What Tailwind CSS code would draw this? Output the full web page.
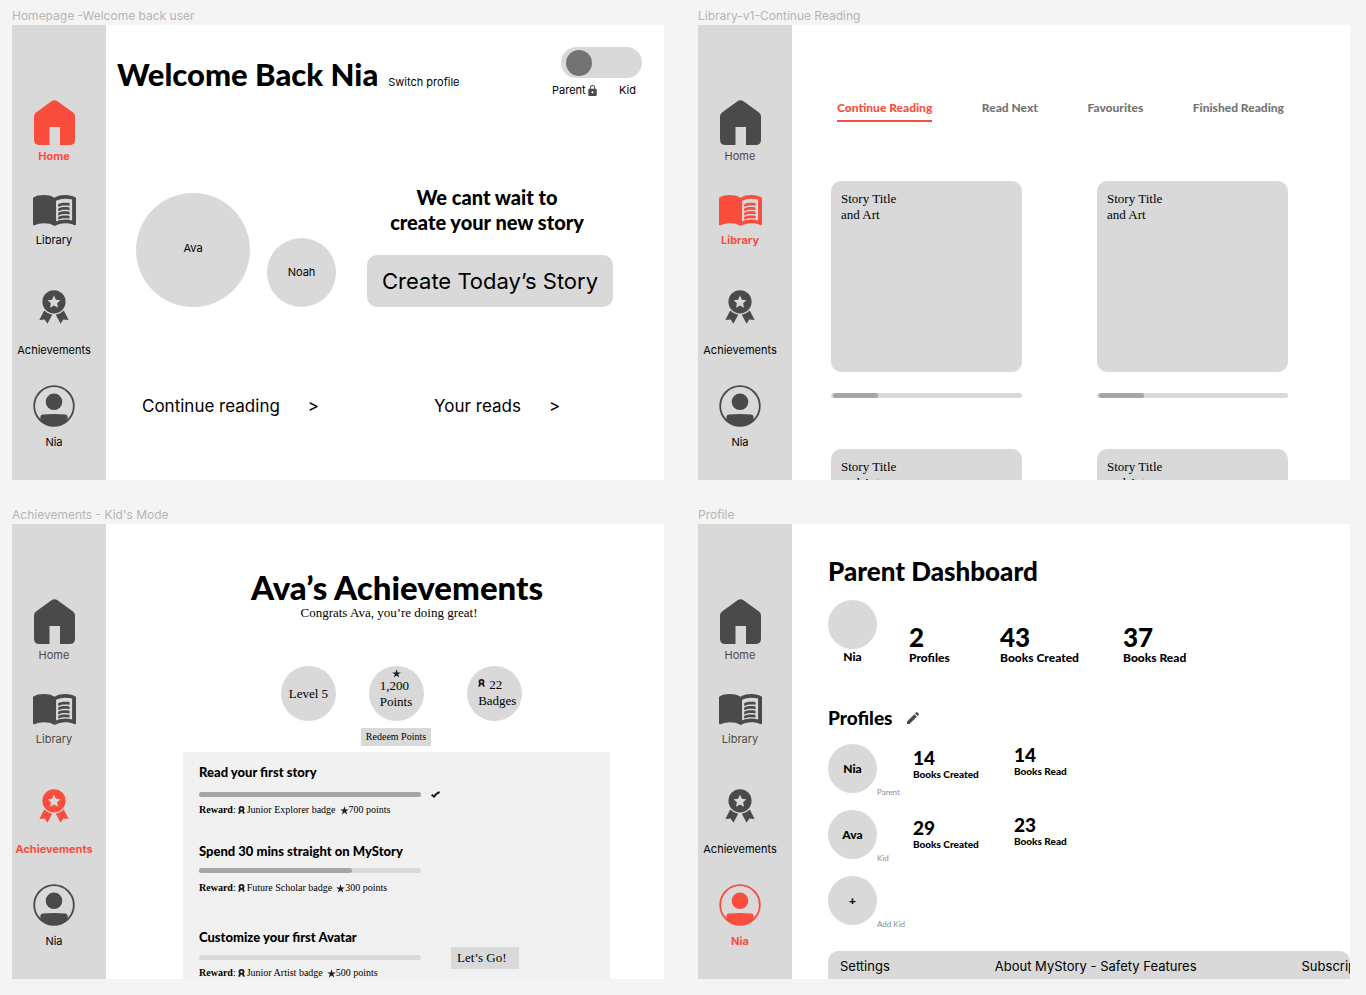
<!DOCTYPE html>
<html lang="en">
<head>
  <meta charset="UTF-8" />
  <meta name="viewport" content="width=device-width, initial-scale=1.0" />
  <title>MyStory Wireframes</title>
  <script src="https://cdn.jsdelivr.net/npm/@tailwindcss/browser@4"></script>
</head>
<body class="bg-[#f4f4f4] font-[Inter,sans-serif] text-black">
  <!-- Shared icons -->
  <svg class="hidden" xmlns="http://www.w3.org/2000/svg">
    <symbol id="icon-home" viewBox="0 0 41 45">
      <path d="M17.5 1.2Q20.5-.9 23.5 1.2L39 12.6Q41 14 41 16.5V39.5Q41 45 35.5 45H26V27H15.5V45H5.5Q0 45 0 39.5V16.5Q0 14 2 12.6Z" />
    </symbol>
    <symbol id="icon-book" viewBox="1 4.5 22 17" preserveAspectRatio="none">
      <path d="M21 5c-1.11-.35-2.33-.5-3.5-.5-1.95 0-4.05.4-5.5 1.5-1.45-1.1-3.55-1.5-5.5-1.5S2.45 4.9 1 6v14.65c0 .25.25.5.5.5.1 0 .15-.05.25-.05C3.1 20.45 5.05 20 6.5 20c1.95 0 4.05.4 5.5 1.5 1.35-.85 3.8-1.5 5.5-1.5 1.65 0 3.35.3 4.75 1.05.1.05.15.05.25.05.25 0 .5-.25.5-.5V6c-.6-.45-1.25-.75-2-1zm0 13.5c-1.1-.35-2.3-.5-3.5-.5-1.34 0-3.3.4-4.7 1V7.6c1.4-.7 3.3-1.1 4.7-1.1 1.2 0 2.4.15 3.5.5v11.5z" />
      <path d="M17.2 10.2c.88 0 1.73.09 2.5.26V8.94c-.79-.15-1.64-.24-2.5-.24-1.5 0-2.4.29-3.3.83v1.56c.9-.54 1.8-.89 3.3-.89zM13.900 11.900v1.560c.9-.54 1.8-.89 3.3-.89.88 0 1.73.09 2.5.26V11.310c-.79-.15-1.64-.24-2.5-.24-1.5 0-2.400.300-3.300.830zM17.200 13.430c-1.500 0-2.400.290-3.300.830v1.560c.9-.54 1.8-.89 3.3-.89.88 0 1.73.09 2.5.26v-1.520c-.79-.16-1.64-.24-2.5-.24zM17.200 15.790c-1.500 0-2.400.290-3.300.830v1.360c.9-.44 1.8-.79 3.3-.79.88 0 1.73.09 2.5.26v-1.420c-.79-.16-1.64-.24-2.5-.24z" />
    </symbol>
    <symbol id="icon-award" viewBox="0 0 30 34">
      <path fill-rule="evenodd" d="M15 .2a11.6 11.6 0 1 1 0 23.2a11.6 11.6 0 1 1 0-23.2zM15 5.6l1.9 4.1 4.5.5-3.3 3.1.9 4.4-4-2.2-4 2.2.9-4.4-3.3-3.1 4.5-.5z" />
      <path d="M5.2 20.6Q8.400 24 13.200 24.800L8.400 33.800 5.700 29.600.4 30.100zM24.800 20.600Q21.600 24 16.800 24.800L21.600 33.800 24.300 29.600 29.600 30.100z" />
    </symbol>
    <symbol id="icon-user" viewBox="0 0 42 42">
      <circle cx="21" cy="21" r="19.8" fill="none" stroke="currentColor" stroke-width="1.8" />
      <circle cx="21" cy="16.8" r="8.3" />
      <path d="M7.4 35.6V32Q7.4 29.9 9.6 29.6Q21 28.4 32.4 29.6Q34.6 29.9 34.6 32V35.6A20 20 0 0 1 7.4 35.6z" />
    </symbol>
    <symbol id="icon-ribbon" viewBox="0 0 8 9">
      <path fill-rule="evenodd" d="M4 0C6.500 0 7.400 1.500 7.400 3.200C7.400 4.200 7 4.900 6.700 5.300L7.900 8.600L5.600 8.800L5 6.600H3L2.400 8.800L.1 8.600L1.300 5.300C1 4.900.6 4.200.6 3.200C.6 1.500 1.500 0 4 0zM4 1.900A1.300 1.300 0 1 0 4 4.500A1.300 1.300 0 1 0 4 1.900z" />
    </symbol>
    <symbol id="icon-star" viewBox="0 0 20 20">
      <path d="M10 .5l2.3 7h7.4l-6 4.3 2.3 7.2-6-4.4L4 19l2.3-7.2-6-4.3h7.4z" />
    </symbol>
  </svg>

  <div class="grid grid-cols-2 gap-x-[34px] gap-y-[26px] pt-[7px] pr-4 pl-3">

    <!-- Homepage -->
    <section>
      <h2 class="text-[12px] leading-[18px] text-[#b5b5b5]">Homepage -Welcome back user</h2>
      <div class="flex aspect-[652/455] overflow-hidden bg-white">
        <nav class="flex w-[94px] shrink-0 flex-col items-center bg-[#d9d9d9] pt-[75px] pr-2.5 text-[11px] leading-4">
          <a href="#" class="flex flex-col items-center gap-[3px] font-bold text-[#f94e3d]">
            <svg class="h-[45px] w-[41px] fill-current"><use href="#icon-home" /></svg>Home
          </a>
          <a href="#" class="mt-[31px] flex flex-col items-center gap-1.5">
            <svg class="h-[31px] w-[43px] fill-current text-[#4a4a4a]"><use href="#icon-book" /></svg>Library
          </a>
          <a href="#" class="mt-[42px] flex flex-col items-center gap-[18px]">
            <svg class="h-[34px] w-[30px] fill-current text-[#4a4a4a]"><use href="#icon-award" /></svg>Achievements
          </a>
          <a href="#" class="mt-[27px] flex flex-col items-center gap-[7px]">
            <svg class="h-[42px] w-[42px] fill-current text-[#4a4a4a]"><use href="#icon-user" /></svg>Nia
          </a>
        </nav>
        <main class="min-w-0 flex-1">
          <header class="flex justify-between pt-[22px] pr-[22px] pl-[11px]">
            <div class="flex items-baseline gap-2.5 pt-[7px]">
              <h1 class="font-[Lato,sans-serif] text-[31px] leading-10 font-black">Welcome Back Nia</h1>
              <a href="#" class="text-[11px]">Switch profile</a>
            </div>
            <div class="flex w-[90px] flex-col items-end">
              <input id="mode" type="checkbox" role="switch" aria-label="Kid mode" class="h-[31px] w-[81px] appearance-none rounded-full bg-[#d9d9d9] px-[5px] py-[3px] before:block before:size-[26px] before:rounded-full before:bg-[#737373] before:content-['']" />
              <label for="mode" class="mt-1 flex w-full items-center pr-1.5 text-[11px] leading-4">
                <span>Parent</span>
                <svg class="ml-0.5 h-[11px] w-[9px] fill-[#4a4a4a]" viewBox="4 1 16 21"><path d="M18 8h-1V6c0-2.76-2.24-5-5-5S7 3.24 7 6v2H6c-1.1 0-2 .9-2 2v10c0 1.1.9 2 2 2h12c1.1 0 2-.9 2-2V10c0-1.1-.9-2-2-2zm-6 9c-1.1 0-2-.9-2-2s.9-2 2-2 2 .9 2 2-.9 2-2 2zm3.1-9H8.900V6c0-1.710 1.390-3.100 3.100-3.100s3.100 1.390 3.100 3.100v2z" /></svg>
                <span class="ml-auto">Kid</span>
              </label>
            </div>
          </header>
          <div class="mt-[87px] flex items-end pl-[30px] text-[11px]">
            <button class="size-[114px] rounded-full bg-[#d9d9d9] pb-1">Ava</button>
            <button class="ml-[17px] size-[69px] rounded-full bg-[#d9d9d9]">Noah</button>
            <div class="ml-[31px] flex flex-col items-center">
              <p class="pr-1.5 text-center font-[Lato,sans-serif] text-[20px] leading-[25px] font-black">We cant wait to<br />create your new story</p>
              <button class="mt-5 h-[52px] rounded-[10px] bg-[#d9d9d9] px-[15px] text-[22px] whitespace-nowrap">Create Today’s Story</button>
            </div>
          </div>
          <div class="mt-[87px] flex gap-[115px] pl-9 text-[17px] leading-6">
            <a href="#" class="flex gap-7"><span>Continue reading</span><span>&gt;</span></a>
            <a href="#" class="flex gap-7"><span>Your reads</span><span>&gt;</span></a>
          </div>
        </main>
      </div>
    </section>

    <!-- Library -->
    <section>
      <h2 class="text-[12px] leading-[18px] text-[#b5b5b5]">Library-v1-Continue Reading</h2>
      <div class="flex aspect-[652/455] overflow-hidden bg-white">
        <nav class="flex w-[94px] shrink-0 flex-col items-center bg-[#d9d9d9] pt-[75px] pr-2.5 text-[11px] leading-4">
          <a href="#" class="flex flex-col items-center gap-[3px] text-[#4a4a4a]">
            <svg class="h-[45px] w-[41px] fill-current"><use href="#icon-home" /></svg>Home
          </a>
          <a href="#" class="mt-[31px] flex flex-col items-center gap-1.5 font-bold text-[#f94e3d]">
            <svg class="h-[31px] w-[43px] fill-current"><use href="#icon-book" /></svg>Library
          </a>
          <a href="#" class="mt-[42px] flex flex-col items-center gap-[18px]">
            <svg class="h-[34px] w-[30px] fill-current text-[#4a4a4a]"><use href="#icon-award" /></svg>Achievements
          </a>
          <a href="#" class="mt-[27px] flex flex-col items-center gap-[7px]">
            <svg class="h-[42px] w-[42px] fill-current text-[#4a4a4a]"><use href="#icon-user" /></svg>Nia
          </a>
        </nav>
        <main class="min-w-0 flex-1">
          <div class="flex justify-between pt-[73px] pr-[66px] pl-[45px] font-[Lato,sans-serif] text-[12px] leading-5 font-black whitespace-nowrap text-[#757575]">
            <a href="#" class="border-b-2 border-[#f94e3d] pb-0.5 text-[#f94e3d]">Continue Reading</a>
            <a href="#">Read Next</a>
            <a href="#">Favourites</a>
            <a href="#">Finished Reading</a>
          </div>
          <div class="mt-[59px] grid grid-cols-2 gap-x-[75px] gap-y-[51px] pr-[62px] pl-[39px] font-['Liberation_Serif',serif] text-[13px] leading-4">
            <article>
              <div class="aspect-square rounded-[10px] bg-[#d9d9d9] p-2.5">Story Title<br />and Art</div>
              <div class="mt-[21px] h-[5px] rounded-full bg-[#d9d9d9] px-0.5"><div class="h-full rounded-full bg-[#a6a6a6]" style="width: 24%"></div></div>
            </article>
            <article>
              <div class="aspect-square rounded-[10px] bg-[#d9d9d9] p-2.5">Story Title<br />and Art</div>
              <div class="mt-[21px] h-[5px] rounded-full bg-[#d9d9d9] px-0.5"><div class="h-full rounded-full bg-[#a6a6a6]" style="width: 24%"></div></div>
            </article>
            <article>
              <div class="aspect-square rounded-[10px] bg-[#d9d9d9] p-2.5">Story Title<br />and Art</div>
            </article>
            <article>
              <div class="aspect-square rounded-[10px] bg-[#d9d9d9] p-2.5">Story Title<br />and Art</div>
            </article>
          </div>
        </main>
      </div>
    </section>

    <!-- Achievements -->
    <section>
      <h2 class="text-[12px] leading-[18px] text-[#b5b5b5]">Achievements - Kid's Mode</h2>
      <div class="flex aspect-[652/455] overflow-hidden bg-white">
        <nav class="flex w-[94px] shrink-0 flex-col items-center bg-[#d9d9d9] pt-[75px] pr-2.5 text-[11px] leading-4">
          <a href="#" class="flex flex-col items-center gap-[3px] text-[#4a4a4a]">
            <svg class="h-[45px] w-[41px] fill-current"><use href="#icon-home" /></svg>Home
          </a>
          <a href="#" class="mt-[31px] flex flex-col items-center gap-1.5 text-[#4a4a4a]">
            <svg class="h-[31px] w-[43px] fill-current"><use href="#icon-book" /></svg>Library
          </a>
          <a href="#" class="mt-[42px] flex flex-col items-center gap-[18px] font-bold text-[#f94e3d]">
            <svg class="h-[34px] w-[30px] fill-current"><use href="#icon-award" /></svg>Achievements
          </a>
          <a href="#" class="mt-[27px] flex flex-col items-center gap-[7px]">
            <svg class="h-[42px] w-[42px] fill-current text-[#4a4a4a]"><use href="#icon-user" /></svg>Nia
          </a>
        </nav>
        <main class="min-w-0 flex-1 pt-[45px] font-['Liberation_Serif',serif] text-[13px] leading-4">
          <h1 class="pl-6 text-center font-[Lato,sans-serif] text-[33px] leading-9 font-black">Ava’s Achievements</h1>
          <p class="pl-2 text-center">Congrats Ava, you’re doing great!</p>
          <div class="mt-[45px] flex items-start justify-center pl-[33px]">
            <div class="flex size-[55px] items-center justify-center rounded-full bg-[#d9d9d9]">Level 5</div>
            <div class="ml-[25px] flex flex-col items-center gap-[7px]">
              <div class="flex size-[55px] flex-col items-center rounded-full bg-[#d9d9d9] pt-[3px]">
                <svg class="size-[9px] fill-[#1e1e1e]"><use href="#icon-star" /></svg>
                <span>1,200<br />Points</span>
              </div>
              <button class="h-[18px] bg-[#d9d9d9] px-[5px] text-[10px]">Redeem Points</button>
            </div>
            <div class="ml-9 size-[55px] rounded-full bg-[#d9d9d9] pt-[11px] pl-[11px]">
              <span class="flex gap-1"><svg class="mt-0.5 h-2 w-[7px] fill-[#1e1e1e]"><use href="#icon-ribbon" /></svg>22</span>
              Badges
            </div>
          </div>
          <div class="mt-1.5 mr-[54px] ml-[77px] bg-[#f1f1f1] pt-2.5 pl-4">
            <div>
              <h3 class="font-[Lato,sans-serif] text-[13px] leading-5 font-black">Read your first story</h3>
              <div class="mt-2.5 flex h-[5px] items-center gap-2.5">
                <div class="h-[5px] w-[222px] rounded-full bg-[#d9d9d9]"><div class="h-full rounded-full bg-[#a6a6a6]" style="width: 100%"></div></div>
                <svg class="h-[7px] w-[9px] fill-none stroke-[#1e1e1e] stroke-2" viewBox="0 0 9 7"><path d="M.6 3.800L3 5.600Q5 2.600 8.600 1" /></svg>
              </div>
              <p class="mt-[7px] flex items-center text-[10px] leading-3"><b>Reward</b>:<svg class="mx-0.5 h-2 w-[7px] fill-[#1e1e1e]"><use href="#icon-ribbon" /></svg>Junior Explorer badge<svg class="ml-1 size-[9px] fill-[#1e1e1e]"><use href="#icon-star" /></svg>700 points</p>
            </div>
            <div class="mt-[25px]">
              <h3 class="font-[Lato,sans-serif] text-[13px] leading-5 font-black">Spend 30 mins straight on MyStory</h3>
              <div class="mt-[7px] h-[5px] w-[222px] rounded-full bg-[#d9d9d9]"><div class="h-full rounded-full bg-[#a6a6a6]" style="width: 69%"></div></div>
              <p class="mt-[9px] flex items-center text-[10px] leading-3"><b>Reward</b>:<svg class="mx-0.5 h-2 w-[7px] fill-[#1e1e1e]"><use href="#icon-ribbon" /></svg>Future Scholar badge<svg class="ml-1 size-[9px] fill-[#1e1e1e]"><use href="#icon-star" /></svg>300 points</p>
            </div>
            <div class="mt-[33px] flex items-end gap-[30px]">
              <div>
                <h3 class="font-[Lato,sans-serif] text-[13px] leading-5 font-black">Customize your first Avatar</h3>
                <div class="mt-2 h-[5px] w-[222px] rounded-full bg-[#d9d9d9]"></div>
                <p class="mt-[7px] flex items-center text-[10px] leading-3"><b>Reward</b>:<svg class="mx-0.5 h-2 w-[7px] fill-[#1e1e1e]"><use href="#icon-ribbon" /></svg>Junior Artist badge<svg class="ml-1 size-[9px] fill-[#1e1e1e]"><use href="#icon-star" /></svg>500 points</p>
              </div>
              <button class="mb-2.5 h-[22px] w-[68px] bg-[#d9d9d9] pl-1.5 text-left">Let’s Go!</button>
            </div>
          </div>
        </main>
      </div>
    </section>

    <!-- Profile -->
    <section>
      <h2 class="text-[12px] leading-[18px] text-[#b5b5b5]">Profile</h2>
      <div class="flex aspect-[652/455] overflow-hidden bg-white">
        <nav class="flex w-[94px] shrink-0 flex-col items-center bg-[#d9d9d9] pt-[75px] pr-2.5 text-[11px] leading-4">
          <a href="#" class="flex flex-col items-center gap-[3px] text-[#4a4a4a]">
            <svg class="h-[45px] w-[41px] fill-current"><use href="#icon-home" /></svg>Home
          </a>
          <a href="#" class="mt-[31px] flex flex-col items-center gap-1.5 text-[#4a4a4a]">
            <svg class="h-[31px] w-[43px] fill-current"><use href="#icon-book" /></svg>Library
          </a>
          <a href="#" class="mt-[42px] flex flex-col items-center gap-[18px]">
            <svg class="h-[34px] w-[30px] fill-current text-[#4a4a4a]"><use href="#icon-award" /></svg>Achievements
          </a>
          <a href="#" class="mt-[27px] flex flex-col items-center gap-[7px] font-bold text-[#f94e3d]">
            <svg class="h-[42px] w-[42px] fill-current"><use href="#icon-user" /></svg>Nia
          </a>
        </nav>
        <main class="min-w-0 flex-1 pt-[31px] pl-9 font-[Lato,sans-serif] font-black">
          <h1 class="text-[26px] leading-8">Parent Dashboard</h1>
          <div class="mt-[13px] flex items-end text-[12px] leading-4">
            <div class="w-[49px] pb-px text-center"><div class="size-[49px] rounded-full bg-[#d9d9d9]"></div>Nia</div>
            <div class="ml-8 w-[91px]"><div class="text-[26px] leading-[26px]">2</div>Profiles</div>
            <div class="w-[123px]"><div class="text-[26px] leading-[26px]">43</div>Books Created</div>
            <div><div class="text-[26px] leading-[26px]">37</div>Books Read</div>
          </div>
          <div class="mt-10 flex items-center gap-3.5">
            <h3 class="text-[19px] leading-6">Profiles</h3>
            <button aria-label="Edit profiles"><svg class="size-3 fill-[#4a4a4a]" viewBox="3 3 18 18"><path d="M3 17.25V21h3.75L17.81 9.94l-3.75-3.75L3 17.25zM20.71 7.04c.39-.39.39-1.02 0-1.41l-2.34-2.34c-.39-.39-1.02-.39-1.41 0l-1.83 1.83 3.75 3.75 1.83-1.83z" /></svg></button>
          </div>
          <div class="mt-3.5 flex flex-col gap-3 text-[10px] leading-3">
            <div class="flex h-[54px] items-start">
              <button class="size-[49px] rounded-full bg-[#d9d9d9] text-[12px]">Nia</button>
              <span class="w-9 self-end text-[8px] font-normal text-[#8c8c8c]">Parent</span>
              <div class="w-[101px] pt-1"><div class="text-[19px] leading-5">14</div>Books Created</div>
              <div class="pt-px"><div class="text-[19px] leading-5">14</div>Books Read</div>
            </div>
            <div class="flex h-[54px] items-start">
              <button class="size-[49px] rounded-full bg-[#d9d9d9] text-[12px]">Ava</button>
              <span class="w-9 self-end text-[8px] font-normal text-[#8c8c8c]">Kid</span>
              <div class="w-[101px] pt-2"><div class="text-[19px] leading-5">29</div>Books Created</div>
              <div class="pt-[5px]"><div class="text-[19px] leading-5">23</div>Books Read</div>
            </div>
            <div class="flex h-[54px] items-start">
              <button class="size-[49px] rounded-full bg-[#d9d9d9] text-[12px]">+</button>
              <span class="self-end text-[8px] font-normal text-[#8c8c8c]">Add Kid</span>
            </div>
          </div>
          <footer class="mt-[21px] flex h-[52px] gap-[105px] overflow-hidden rounded-[10px] bg-[#d9d9d9] pt-[5px] pl-3 font-[Inter,sans-serif] text-[13px] leading-5 font-normal whitespace-nowrap">
            <a href="#">Settings</a>
            <a href="#">About MyStory - Safety Features</a>
            <a href="#">Subscription</a>
          </footer>
        </main>
      </div>
    </section>

  </div>
</body>
</html>
